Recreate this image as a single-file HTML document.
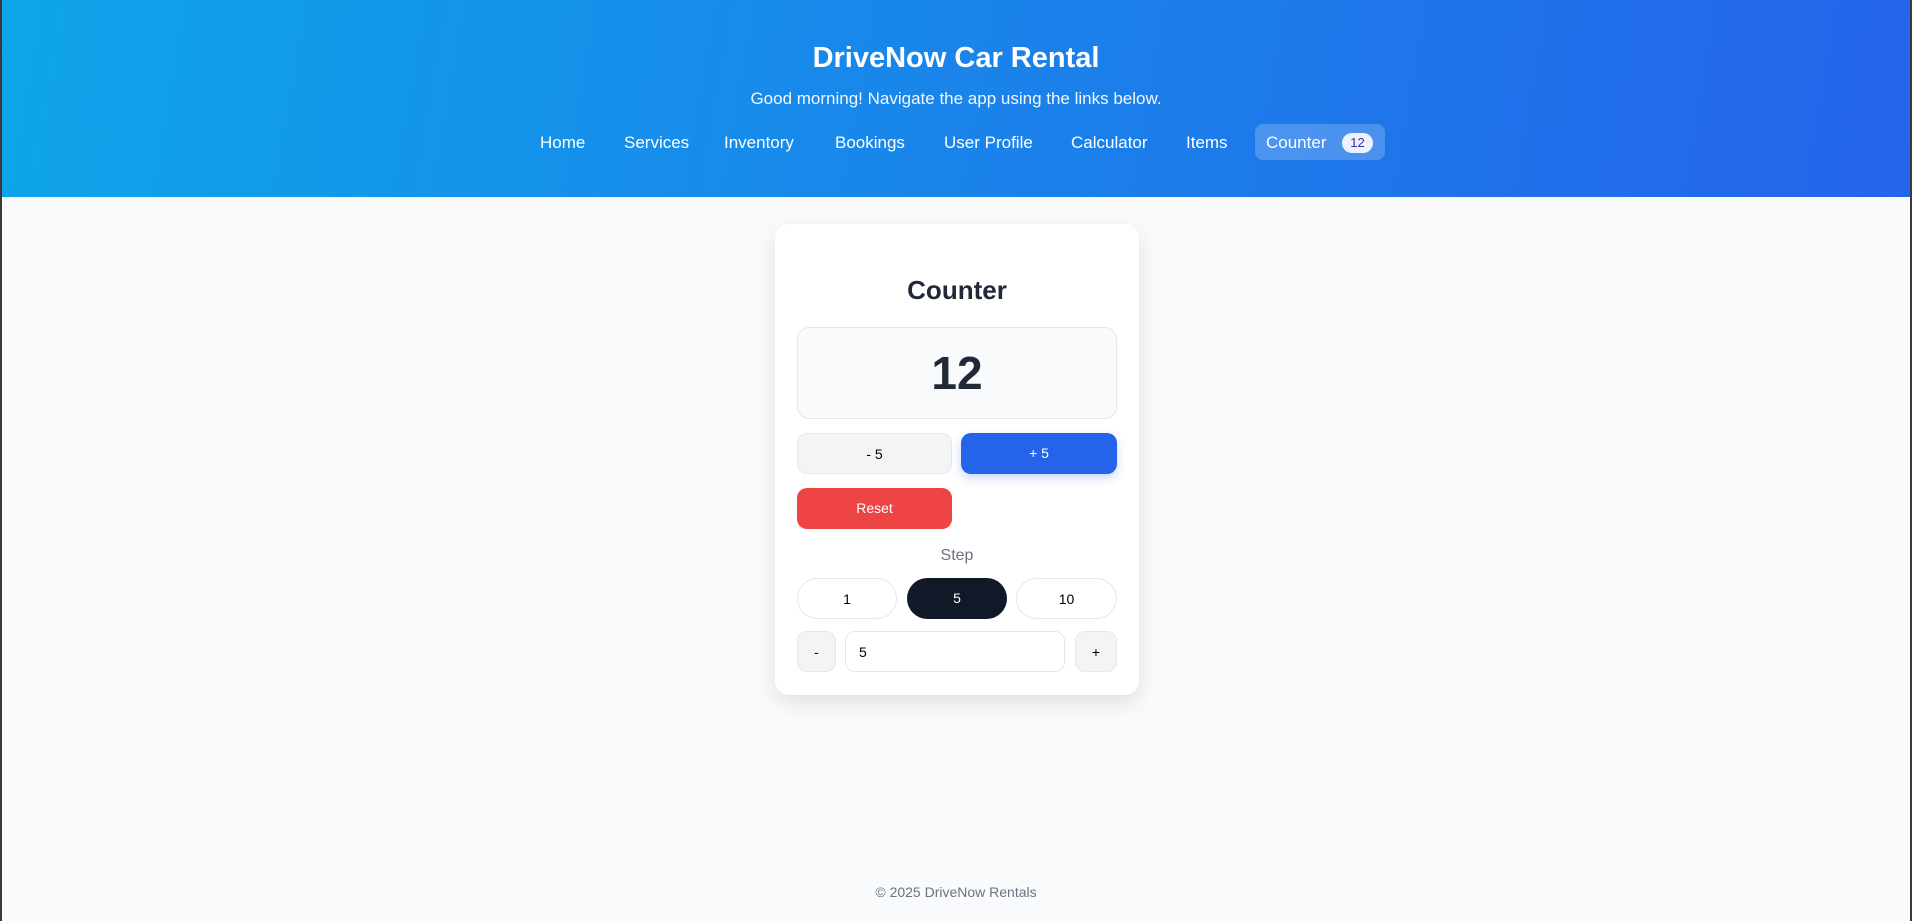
<!DOCTYPE html>
<html><head><meta charset="utf-8"><style>
*{box-sizing:border-box;margin:0;padding:0}
html,body{width:1912px;height:921px;overflow:hidden}
body{background:#f9fafb;font-family:"Liberation Sans",sans-serif;position:relative}
.edge{position:absolute;top:0;width:2px;height:921px;background:#3a3a3a;z-index:5}
header{position:absolute;left:0;top:0;width:1912px;height:197px;background:linear-gradient(100deg,#0ea5e9,#2563eb);color:#fff}
h1{position:absolute;top:42px;width:100%;text-align:center;font-size:29px;font-weight:bold}
.sub{position:absolute;top:89px;width:100%;text-align:center;font-size:17px;color:#f0f8ff}
.nav{position:absolute;top:132px;font-size:17px;color:#fff;line-height:22px}
.pill{position:absolute;left:1255px;top:124px;width:130px;height:36px;border-radius:8px;background:rgba(255,255,255,.2)}
.badge{position:absolute;left:1342px;top:133px;width:31px;height:20px;border-radius:10px;background:#eef2ff;color:#3730a3;font-size:13px;text-align:center;line-height:20px}
.card{position:absolute;left:775px;top:224px;width:364px;height:471px;background:#fff;border-radius:14px;box-shadow:0 8px 20px rgba(0,0,0,.1)}
.abs{position:absolute;text-align:center;font-size:14px;color:#000}
.t{left:0;width:364px;top:51px;font-size:26px;font-weight:bold;color:#1f2937}
.disp{left:22px;top:103px;width:320px;height:92px;background:#f8fafc;border:1px solid #e5e7eb;border-radius:12px;font-size:46px;font-weight:bold;color:#1f2937;line-height:90px}
.b{height:41px;line-height:41px;border-radius:10px}
.g{background:#f3f4f6;border:1px solid #e5e7eb}
.w{background:#fff;border:1px solid #e5e7eb}
</style></head><body>
<div class="edge" style="left:0"></div><div class="edge" style="right:0"></div>
<header>
<h1>DriveNow Car Rental</h1>
<div class="sub">Good morning! Navigate the app using the links below.</div>
<div class="pill"></div>
<span class="nav" style="left:540px">Home</span>
<span class="nav" style="left:624px">Services</span>
<span class="nav" style="left:724px">Inventory</span>
<span class="nav" style="left:835px">Bookings</span>
<span class="nav" style="left:944px">User Profile</span>
<span class="nav" style="left:1071px">Calculator</span>
<span class="nav" style="left:1186px">Items</span>
<span class="nav" style="left:1266px">Counter</span>
<div class="badge">12</div>
</header>
<div class="card">
<div class="abs t">Counter</div>
<div class="abs disp">12</div>
<div class="abs b g" style="left:22px;top:209px;width:155px">- 5</div>
<div class="abs b" style="left:186px;top:209px;width:156px;background:#2563eb;color:#fff;box-shadow:0 4px 10px rgba(37,99,235,.25)">+ 5</div>
<div class="abs b" style="left:22px;top:264px;width:155px;background:#ef4444;color:#fff">Reset</div>
<div class="abs" style="left:0;width:364px;top:323px;font-size:16px;color:#6b7280">Step</div>
<div class="abs b w" style="left:22px;top:354px;width:100px;border-radius:21px">1</div>
<div class="abs b" style="left:132px;top:354px;width:100px;border-radius:21px;background:#111827;color:#fff">5</div>
<div class="abs b w" style="left:241px;top:354px;width:101px;border-radius:21px">10</div>
<div class="abs b g" style="left:22px;top:407px;width:39px">-</div>
<div class="abs b w" style="left:70px;top:407px;width:220px;text-align:left;padding-left:13px">5</div>
<div class="abs b g" style="left:300px;top:407px;width:42px">+</div>
</div>
<div class="abs" style="left:0;width:1912px;top:884px;font-size:14px;color:#6b7280">© 2025 DriveNow Rentals</div>
</body></html>
